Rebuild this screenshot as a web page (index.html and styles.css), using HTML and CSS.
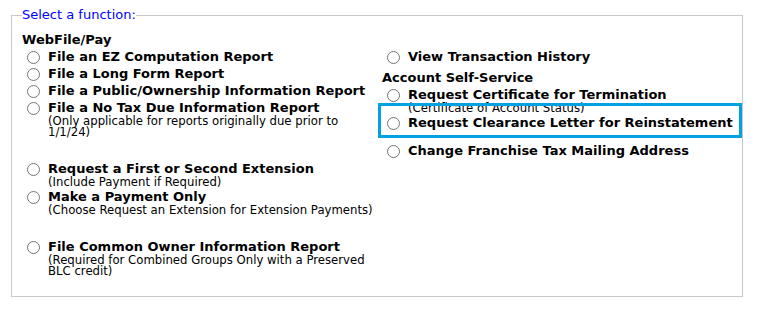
FILE: index.html
```html
<!DOCTYPE html>
<html lang="en">
<head>
    <meta charset="UTF-8">
    <meta name="viewport" content="width=device-width, initial-scale=1.0">
    <title>Select a function</title>
    <link rel="stylesheet" href="styles.css">
</head>
<body>
    <fieldset class="functions">
        <legend>Select a function:</legend>
        <div class="group-title">WebFile/Pay</div>
        <div class="columns">
            <div class="col">
                <label class="opt"><input type="radio" name="fn"><span class="opt-text">File an EZ Computation Report</span></label>
                <label class="opt"><input type="radio" name="fn"><span class="opt-text">File a Long Form Report</span></label>
                <label class="opt"><input type="radio" name="fn"><span class="opt-text">File a Public/Ownership Information Report</span></label>
                <label class="opt"><input type="radio" name="fn"><span class="opt-text">File a No Tax Due Information Report<span class="note">(Only applicable for reports originally due prior to 1/1/24)</span></span></label>

                <label class="opt spaced"><input type="radio" name="fn"><span class="opt-text">Request a First or Second Extension<span class="note">(Include Payment if Required)</span></span></label>
                <label class="opt"><input type="radio" name="fn"><span class="opt-text">Make a Payment Only<span class="note">(Choose Request an Extension for Extension Payments)</span></span></label>

                <label class="opt spaced"><input type="radio" name="fn"><span class="opt-text">File Common Owner Information Report<span class="note">(Required for Combined Groups Only with a Preserved BLC credit)</span></span></label>
            </div>
            <div class="col col-right">
                <label class="opt"><input type="radio" name="fn"><span class="opt-text">View Transaction History</span></label>
                <div class="group-title sub-title">Account Self-Service</div>
                <label class="opt"><input type="radio" name="fn"><span class="opt-text">Request Certificate for Termination<span class="note">(Certificate of Account Status)</span></span></label>
                <label class="opt highlight"><input type="radio" name="fn"><span class="opt-text">Request Clearance Letter for Reinstatement</span></label>
                <label class="opt"><input type="radio" name="fn"><span class="opt-text">Change Franchise Tax Mailing Address</span></label>
            </div>
        </div>
    </fieldset>
</body>
</html>
```

FILE: styles.css
```css
body {
    margin: 0;
    font-family: "DejaVu Sans", Verdana, sans-serif;
    color: #000;
    background-color: #fff;
}
.functions {
    margin: 8px 17px 0 11px;
    padding: 9px 10px 19px 10px;
    border: 1px solid #c8c8c8;
    min-inline-size: 0;
}
.functions legend {
    padding: 0;
    font-size: 13px;
    line-height: 14px;
    color: #0000ff;
}
.group-title {
    font-size: 13px;
    font-weight: bold;
    line-height: 17px;
}
.sub-title {
    margin-top: 4px;
}
.columns {
    display: grid;
    grid-template-columns: 354px 1fr;
    column-gap: 6px;
}
.col-right .opt-text {
    white-space: nowrap;
}
.opt {
    display: flex;
    align-items: flex-start;
    font-size: 13px;
    font-weight: bold;
    line-height: 17px;
}
.opt input {
    flex: none;
    width: 13px;
    height: 13px;
    margin: 3px 8px 0 5px;
}
.opt-text {
    display: block;
}
.note {
    display: block;
    font-size: 11.7px;
    font-weight: normal;
    line-height: 11px;
}
.spaced {
    margin-top: 22px;
}
.highlight {
    position: relative;
    margin-bottom: 11px;
}
.highlight::before {
    content: "";
    position: absolute;
    top: -11px;
    left: -4px;
    width: 364px;
    height: 35px;
    box-sizing: border-box;
    border: 3px solid #00a3e0;
    pointer-events: none;
}
```
